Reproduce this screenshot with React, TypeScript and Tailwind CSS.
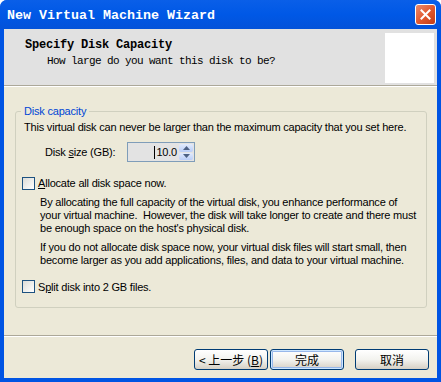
import React from "react";

const body = "font-['Liberation_Sans',Tahoma,sans-serif] text-[11px] tracking-[-0.2px] text-black";

const Checkbox = () => (
  <span className="inline-block w-[13px] h-[13px] border border-[#1c5180] bg-gradient-to-br from-[#dcdcd7] to-white shrink-0" />
);

const XpButton = (props: { children: React.ReactNode; primary?: boolean; className?: string }) => (
  <button
    className={
      "h-[21px] w-[74px] rounded-[3px] border border-[#003c74] bg-gradient-to-b from-white via-[#f3f3ef] to-[#d6d0c5] font-['Noto_Sans_CJK_SC',sans-serif] text-[12px] leading-none text-black flex items-center justify-center " +
      (props.primary ? "shadow-[inset_0_0_0_1px_#cee7ff,inset_0_0_0_2px_#98b8ea] " : "") +
      (props.className || "")
    }
  >
    {props.children}
  </button>
);

export default function App() {
  return (
    <div className="w-[441px] h-[382px] bg-white">
      <div className="w-full h-full rounded-t-[7px] overflow-hidden bg-[#0054e3] flex flex-col">
        {/* title bar */}
        <div className="h-[29px] shrink-0 bg-gradient-to-b from-[#0a5fe8] via-[#0058e6] to-[#0352d9] flex items-center pl-[7px] pr-[5px]">
          <span className="font-['Liberation_Mono',monospace] font-bold text-[13.33px] text-white flex-1 pt-[2px]">
            New Virtual Machine Wizard
          </span>
          <div className="w-[21px] h-[21px] rounded-[3px] border border-white bg-gradient-to-br from-[#e88a6c] via-[#e2592f] to-[#c23c14] flex items-center justify-center">
            <svg width="11" height="11" viewBox="0 0 11 11">
              <path d="M1.5 1.5 L9.5 9.5 M9.5 1.5 L1.5 9.5" stroke="white" strokeWidth="2" strokeLinecap="square" />
            </svg>
          </div>
        </div>

        {/* client area */}
        <div className="flex-1 mx-[4px] mb-[4px] bg-[#ece9d8] flex flex-col">
          {/* header */}
          <div className="h-[57px] shrink-0 bg-[#e1e1e1] flex border-b border-[#aca899]">
            <div className="flex-1 pl-[21px] pt-[9px] font-['Liberation_Mono',monospace] text-black">
              <div className="font-bold text-[12px] tracking-[-0.2px] leading-[14px]">Specify Disk Capacity</div>
              <div className="text-[11px] tracking-[-0.6px] leading-[14px] mt-[2px] pl-[22px]">
                How large do you want this disk to be?
              </div>
            </div>
            <div className="w-[49px] h-[50px] bg-white mt-[4px] mr-[3px]" />
          </div>
          <div className="h-px bg-white" />

          {/* group box */}
          <div className="relative mt-[24px] ml-[11px] mr-[10px] rounded-[3px] border border-[#d0d0bf] pb-[12px]">
            <span className={"absolute -top-[9px] left-[5px] px-[3px] bg-[#ece9d8] font-['Liberation_Sans',Tahoma,sans-serif] text-[11px] tracking-[-0.2px] text-[#0046d5]"}>
              Disk capacity
            </span>
            <div className={body + " pl-[8px] pt-[9px] leading-[13px]"}>
              This virtual disk can never be larger than the maximum capacity that you set here.
            </div>
            <div className="flex items-center mt-[8px]">
              <span className={body + " pl-[29px] w-[111px]"}>
                Disk <u>s</u>ize (GB):
              </span>
              <div className="flex h-[20px] w-[68px] border border-[#7f9db9] bg-[#e3e3e3]">
                <div className={body + " flex-1 flex items-center justify-end pr-[1px] leading-none"}>
                  <span className="inline-block w-px h-[13px] bg-black mr-[1px]" />
                  10.0
                </div>
                <div className="w-[16px] flex flex-col gap-px p-px">
                  <div className="flex-1 rounded-[2px] bg-gradient-to-b from-[#e2ebfd] to-[#b9cdf8] flex items-center justify-center">
                    <svg width="7" height="4" viewBox="0 0 7 4"><path d="M0 4 L3.5 0 L7 4Z" fill="#4d6185" /></svg>
                  </div>
                  <div className="flex-1 rounded-[2px] bg-gradient-to-b from-[#e2ebfd] to-[#b9cdf8] flex items-center justify-center">
                    <svg width="7" height="4" viewBox="0 0 7 4"><path d="M0 0 L3.5 4 L7 0Z" fill="#4d6185" /></svg>
                  </div>
                </div>
              </div>
            </div>

            <div className="flex items-center mt-[13px] ml-[6px] gap-[3px]">
              <Checkbox />
              <span className={body}>
                <u>A</u>llocate all disk space now.
              </span>
            </div>
            <div className={body + " ml-[24px] mr-[6px] mt-[4px] leading-[13px]"}>
              <p>
                By allocating the full capacity of the virtual disk, you enhance performance of your virtual machine.&nbsp; However, the disk will take longer to create and there must be enough space on the host's physical disk.
              </p>
              <p className="mt-[6px]">
                If you do not allocate disk space now, your virtual disk files will start small, then become larger as you add applications, files, and data to your virtual machine.
              </p>
            </div>
            <div className="flex items-center mt-[12px] ml-[6px] gap-[3px]">
              <Checkbox />
              <span className={body}>
                S<u>p</u>lit disk into 2 GB files.
              </span>
            </div>
          </div>

          <div className="flex-1" />
          {/* footer */}
          <div className="h-px bg-[#aca899]" />
          <div className="h-px bg-white" />
          <div className="h-[41px] flex items-start pt-[12px] pl-[190px]">
            <XpButton>&lt; 上一步 (<u>B</u>)</XpButton>
            <XpButton primary className="ml-[2px]">完成</XpButton>
            <XpButton className="ml-[11px]">取消</XpButton>
          </div>
        </div>
      </div>
    </div>
  );
}
